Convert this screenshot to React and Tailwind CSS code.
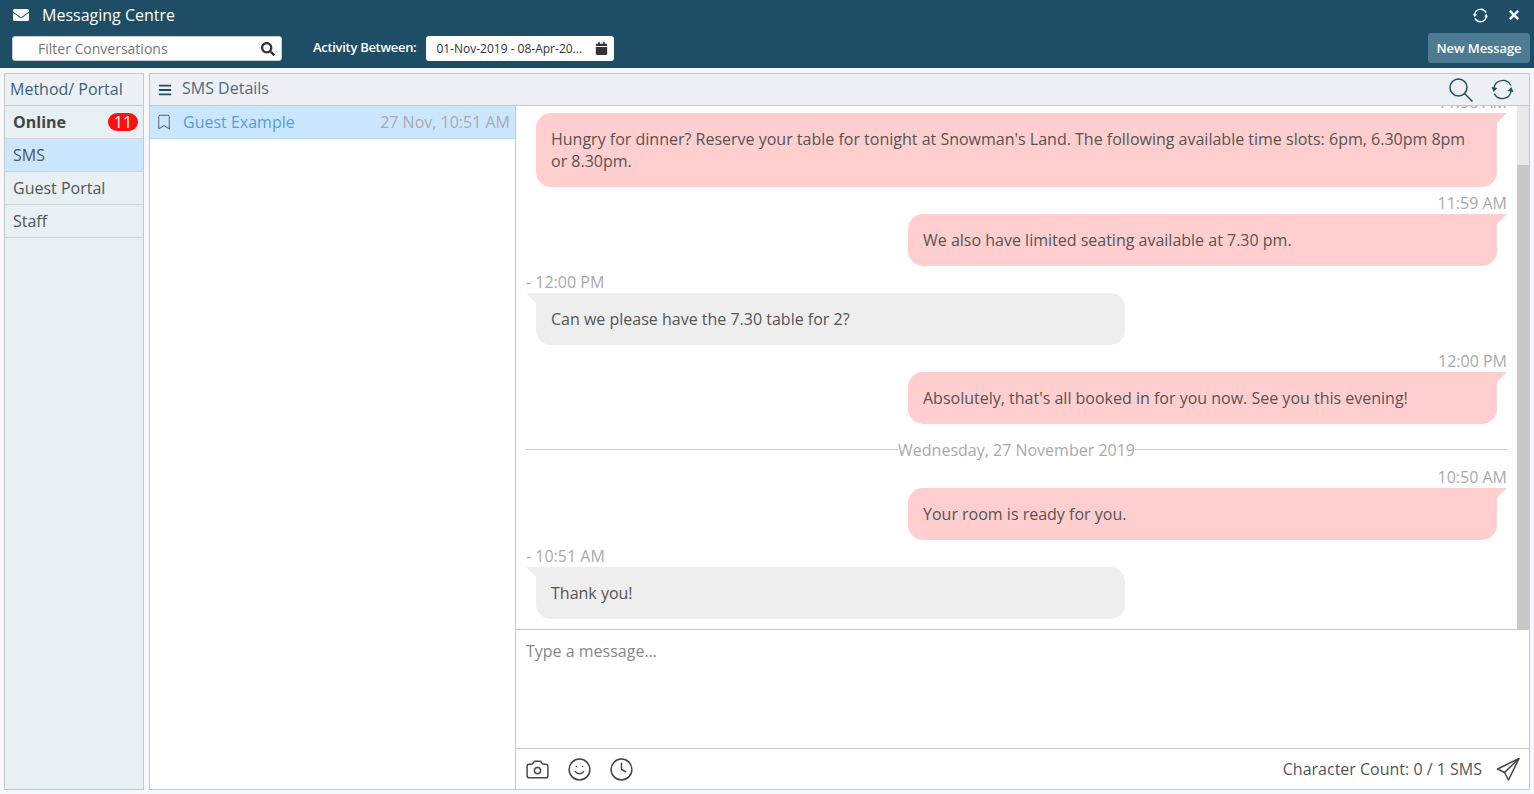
import { FaEnvelope, FaTimes, FaSearch, FaCalendar, FaBars } from "react-icons/fa";
import { Bookmark, Camera, Smile, Clock } from "lucide-react";

const SyncIcon = ({ size, width = 1.3 }) => (
    <svg width={size} height={size} viewBox="0 0 24 24" fill="none" stroke="currentColor" strokeWidth={width}>
        <path d="M3.8 10.5A8.5 8.5 0 0 1 19.8 8" />
        <path d="M20.2 13.5A8.5 8.5 0 0 1 4.2 16" />
        <path d="M1.5 9.5L7 10.5L3.5 14.5Z" fill="currentColor" stroke="none" />
        <path d="M22.5 14.5L17 13.5L20.5 9.5Z" fill="currentColor" stroke="none" />
    </svg>
);

const SearchIcon = () => (
    <svg width="24" height="24" viewBox="0 0 24 24" fill="none" stroke="currentColor" strokeWidth="1.5">
        <circle cx="9.5" cy="9.5" r="8.5" />
        <path d="M15.5 15.5L23.5 23.5" />
    </svg>
);

const PlaneIcon = () => (
    <svg width="24" height="24" viewBox="0 0 24 24" fill="none" stroke="currentColor" strokeWidth="1.5" strokeLinejoin="round">
        <path d="M23 1.5L1.5 12L8.5 15.5L12.5 23Z" />
        <path d="M23 1.5L8.5 15.5" />
    </svg>
);

const Time = ({ children, right }) => (
    <div className={`h-[27px] leading-[32px] text-[16px] text-[#aaaaaa] ${right ? "text-right" : "text-left"}`}>
        {children}
    </div>
);

const Sent = ({ children, full }) => (
    <div className="flex justify-end pr-[10px]">
        <div className={`relative rounded-[15px] rounded-tr-none bg-[#ffcece] px-[15px] py-[15px] text-[16px] leading-[22px] text-[#555555] ${full ? "w-full ml-[10px]" : "w-[589px]"}`}>
            {children}
            <span className="absolute top-0 right-[-10px] h-[10px] w-[10px] bg-[#ffcece] [clip-path:polygon(0_0,100%_0,0_100%)]"></span>
        </div>
    </div>
);

const Received = ({ children }) => (
    <div className="flex pl-[10px]">
        <div className="relative w-[589px] rounded-[15px] rounded-tl-none bg-[#eeeeee] px-[15px] py-[15px] text-[16px] leading-[22px] text-[#555555]">
            {children}
            <span className="absolute top-0 left-[-10px] h-[10px] w-[10px] bg-[#eeeeee] [clip-path:polygon(0_0,100%_0,100%_100%)]"></span>
        </div>
    </div>
);

const App = () => {
    return (
        <div className="flex h-[794px] w-[1534px] flex-col overflow-hidden bg-[#f6f8fb] font-['Open_Sans',sans-serif]">
            {/* top bar */}
            <div className="h-[68px] shrink-0 bg-[#1d4e66] text-white">
                <div className="flex h-[30px] items-center pl-[13px] pr-[13px]">
                    <FaEnvelope className="text-[16px]" />
                    <span className="ml-[13px] text-[16px]">Messaging Centre</span>
                    <span className="ml-auto"><SyncIcon size={17} width={2} /></span>
                    <FaTimes className="ml-[18px] text-[14px]" />
                </div>
                <div className="flex items-start pl-[10px] pr-[4px]">
                    <div className="mt-[6px] ml-[2px] flex h-[25px] w-[270px] items-center rounded-[3px] border border-[#cccccc] bg-white pl-[25px] pr-[6px]">
                        <span className="text-[14px] text-[#777777]">Filter Conversations</span>
                        <FaSearch className="ml-auto text-[14px] text-[#333333]" />
                    </div>
                    <span className="mt-[8px] ml-[31px] text-[13px] font-semibold tracking-[-0.3px]">Activity Between:</span>
                    <div className="mt-[6px] ml-[10px] flex h-[25px] w-[188px] items-center rounded-[3px] bg-white pl-[10px] pr-[5px]">
                        <span className="text-[12px] text-[#333333]">01-Nov-2019 - 08-Apr-20...</span>
                        <FaCalendar className="ml-auto mr-[1px] text-[13px] text-[#333333]" />
                    </div>
                    <button className="mt-[3px] ml-auto h-[30px] w-[102px] rounded-[3px] bg-[#4d7b93] pt-[1px] text-[13px] font-semibold tracking-[-0.1px] text-white">
                        New Message
                    </button>
                </div>
            </div>

            {/* body */}
            <div className="mt-[5px] flex h-[717px] gap-[5px] pl-[4px]">
                {/* method column */}
                <div className="w-[140px] border border-[#c4c8cc] bg-[#e7f0f2]">
                    <div className="flex h-[32px] items-center border-b border-[#c4c8cc] bg-[#edf0f5] pb-[2px] pl-[5px] text-[16px] text-[#3a6478]">
                        Method/ Portal
                    </div>
                    <div className="flex h-[33px] items-center border-b border-[#d0d6d8] pl-[8px] pr-[5px] text-[16px] font-bold text-[#444444]">
                        Online
                        <span className="ml-auto flex h-[18px] w-[30px] items-center justify-center rounded-full bg-[#ff0f0f] text-[16px] font-normal text-white">11</span>
                    </div>
                    <div className="flex h-[33px] items-center border-b border-[#b5d6ee] bg-[#cbe7ff] pl-[8px] text-[16px] text-[#555555]">SMS</div>
                    <div className="flex h-[33px] items-center border-b border-[#d0d6d8] pl-[8px] text-[16px] text-[#555555]">Guest Portal</div>
                    <div className="flex h-[33px] items-center border-b border-[#d0d6d8] pl-[8px] text-[16px] text-[#555555]">Staff</div>
                </div>

                {/* details panel */}
                <div className="flex w-[1381px] flex-col border border-[#c4c8cc] bg-white">
                    <div className="flex h-[32px] shrink-0 items-center border-b border-[#c4c8cc] bg-[#edf0f5] pl-[8px] pr-[14px] text-[#1d4e66]">
                        <FaBars className="text-[14px]" />
                        <span className="ml-[10px] pb-[3px] text-[16px] text-[#4f6b7a]">SMS Details</span>
                        <span className="ml-auto"><SearchIcon /></span>
                        <span className="ml-[17px]"><SyncIcon size={25} /></span>
                    </div>
                    <div className="flex min-h-0 flex-1">
                        {/* conversations */}
                        <div className="w-[366px] shrink-0 border-r border-[#c4c8cc]">
                            <div className="flex h-[33px] items-center border-b border-[#b5d6ee] bg-[#cbe7ff] pl-[5px] pr-[5px] text-[16px]">
                                <Bookmark size={18} strokeWidth={1.25} className="text-[#555555]" />
                                <span className="ml-[10px] text-[#5b9bd5]">Guest Example</span>
                                <span className="ml-auto text-[#aaaaaa]">27 Nov, 10:51 AM</span>
                            </div>
                        </div>

                        {/* chat */}
                        <div className="flex min-w-0 flex-1 flex-col">
                            <div className="flex h-[524px] shrink-0 border-b border-[#c4c8cc]">
                                <div className="min-w-0 flex-1 overflow-hidden px-[10px]">
                                    <div className="-mt-[20px]">
                                        <Time right>11:58 AM</Time>
                                        <Sent full>
                                            Hungry for dinner? Reserve your table for tonight at Snowman's Land. The following available time slots: 6pm, 6.30pm 8pm or 8.30pm.
                                        </Sent>
                                        <Time right>11:59 AM</Time>
                                        <Sent>We also have limited seating available at 7.30 pm.</Sent>
                                        <Time>- 12:00 PM</Time>
                                        <Received>Can we please have the 7.30 table for 2?</Received>
                                        <Time right>12:00 PM</Time>
                                        <Sent>Absolutely, that's all booked in for you now. See you this evening!</Sent>
                                        <div className="flex h-[37px] items-center pt-[14px] text-[16px] text-[#aaaaaa]">
                                            <span className="h-px flex-1 bg-[#c8c8c8]"></span>
                                            <span className="leading-[22px]">Wednesday, 27 November 2019</span>
                                            <span className="h-px flex-1 bg-[#c8c8c8]"></span>
                                        </div>
                                        <Time right>10:50 AM</Time>
                                        <Sent>Your room is ready for you.</Sent>
                                        <Time>- 10:51 AM</Time>
                                        <Received>Thank you!</Received>
                                    </div>
                                </div>
                                {/* scrollbar */}
                                <div className="flex w-[12px] shrink-0 flex-col bg-[#e9e9e9]">
                                    <div className="mt-[59px] flex-1 bg-[#c8c8c8]"></div>
                                </div>
                            </div>

                            <div className="h-[119px] shrink-0 border-b border-[#c4c8cc] pl-[10px] pt-[10px] text-[16px] leading-[22px] text-[#888888]">
                                Type a message...
                            </div>

                            <div className="flex min-h-0 flex-1 items-center pl-[9px] pr-[9px] text-[#444444]">
                                <Camera size={25} strokeWidth={1.4} />
                                <Smile size={25} strokeWidth={1.4} className="ml-[17px]" />
                                <Clock size={25} strokeWidth={1.4} className="ml-[17px]" />
                                <span className="ml-auto text-[16px] text-[#555555]">Character Count: 0 / 1 SMS</span>
                                <span className="ml-[14px]"><PlaneIcon /></span>
                            </div>
                        </div>
                    </div>
                </div>
            </div>
        </div>
    );
};

export default App;
